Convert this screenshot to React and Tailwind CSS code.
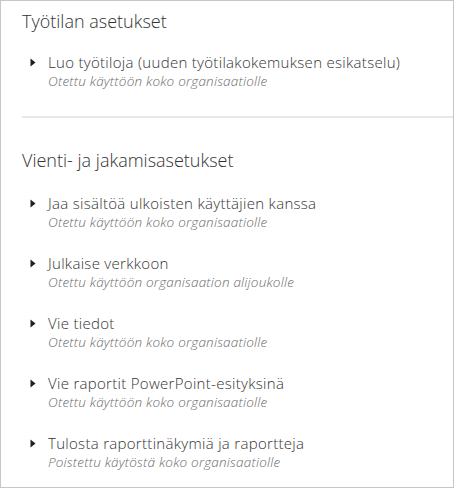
import React from "react";

const sections = [
  {
    title: "Työtilan asetukset",
    items: [
      {
        name: "Luo työtiloja (uuden työtilakokemuksen esikatselu)",
        status: "Otettu käyttöön koko organisaatiolle",
      },
    ],
  },
  {
    title: "Vienti- ja jakamisasetukset",
    items: [
      { name: "Jaa sisältöä ulkoisten käyttäjien kanssa", status: "Otettu käyttöön koko organisaatiolle" },
      { name: "Julkaise verkkoon", status: "Otettu käyttöön organisaation alijoukolle" },
      { name: "Vie tiedot", status: "Otettu käyttöön koko organisaatiolle" },
      { name: "Vie raportit PowerPoint-esityksinä", status: "Otettu käyttöön koko organisaatiolle" },
      { name: "Tulosta raporttinäkymiä ja raportteja", status: "Poistettu käytöstä koko organisaatiolle" },
    ],
  },
];

const Caret = () => (
  <svg width="6" height="9" viewBox="0 0 6 9" className="mt-[6px] shrink-0">
    <path d="M0.5 0.5 L5.5 4.5 L0.5 8.5 Z" fill="#1f1f1f" />
  </svg>
);

const Item = ({ name, status }) => (
  <div className="flex items-start pl-[8px] gap-[12px]">
    <Caret />
    <div className="flex flex-col">
      <div className="text-[15px] leading-[20px] font-[350] tracking-[0.3px] text-[#333333]">{name}</div>
      <div className="text-[13.5px] leading-[18px] font-light italic tracking-[0.2px] text-[#6a6a6a]">{status}</div>
    </div>
  </div>
);

export default function App() {
  return (
    <div
      className="w-[454px] h-[488px] border border-[#c6c6c6] bg-white overflow-hidden"
      style={{ fontFamily: '"Open Sans", "Noto Sans", sans-serif' }}
    >
      <div className="pl-[21px] pt-[8px]">
        <div className="text-[18px] leading-[24px] font-light text-[#333333]">{sections[0].title}</div>
        <div className="mt-[19px] flex flex-col">
          {sections[0].items.map((it) => (
            <Item key={it.name} {...it} />
          ))}
        </div>
        <div className="mt-[26px] h-[2px] bg-[#e8e8e8]" />
        <div className="mt-[30px] text-[18px] leading-[24px] font-light text-[#333333]">{sections[1].title}</div>
        <div className="mt-[21px] flex flex-col gap-[22px]">
          {sections[1].items.map((it) => (
            <Item key={it.name} {...it} />
          ))}
        </div>
      </div>
    </div>
  );
}
